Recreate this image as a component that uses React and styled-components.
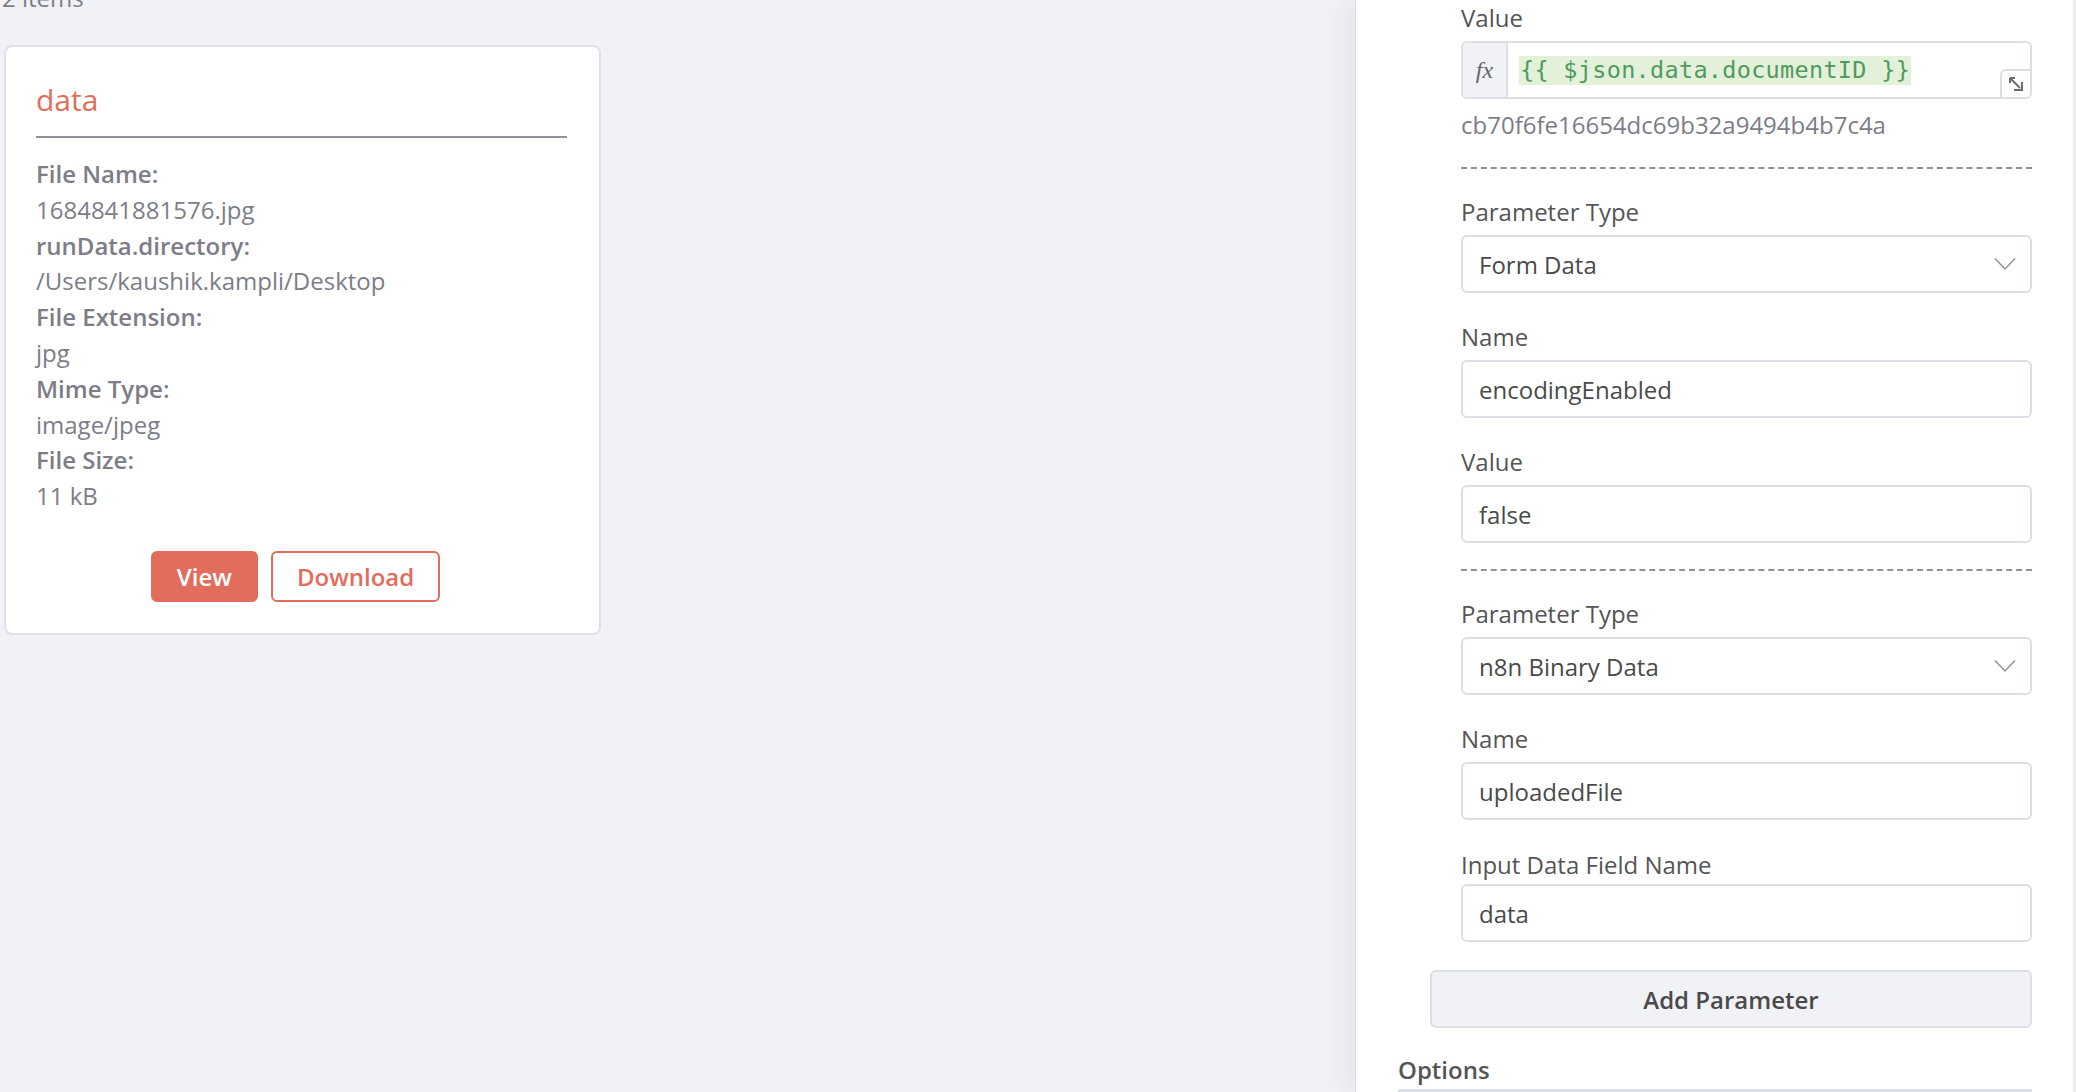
import React from "react";
import styled, { createGlobalStyle } from "styled-components";

const GlobalStyle = createGlobalStyle`
  html, body {
    margin: 0;
    padding: 0;
    width: 2076px;
    height: 1092px;
    overflow: hidden;
    background: #f1f2f6;
    font-family: "Open Sans", "Liberation Sans", sans-serif;
  }
`;

const Page = styled.div`
  display: flex;
  width: 2076px;
  height: 1092px;
  overflow: hidden;
`;

const OutputArea = styled.div`
  flex: 1;
  background: #f1f2f6;
  padding: 0 0 0 4px;
  box-sizing: border-box;
`;

const ItemsCount = styled.div`
  margin-top: -18px;
  height: 24px;
  font-size: 24px;
  line-height: 32px;
  color: #7d7d87;
  margin-left: -2px;
`;

const Card = styled.div`
  margin-top: 39px;
  width: 597px;
  box-sizing: border-box;
  background: #fff;
  border: 2px solid #dfe1e8;
  border-radius: 8px;
  padding: 33px 32px 31px 30px;
`;

const CardTitle = styled.div`
  font-size: 30px;
  line-height: 40px;
  color: #e26d5c;
  padding-bottom: 16px;
  border-bottom: 2px solid #909098;
`;

const MetaList = styled.div`
  margin-top: 18px;
  display: flex;
  flex-direction: column;
`;

const MetaLine = styled.div`
  font-size: 24px;
  line-height: 35.8px;
  color: #7d7d87;
  font-weight: ${(p) => (p.$label ? 600 : 400)};
`;

const ButtonRow = styled.div`
  margin-top: 37px;
  display: flex;
  justify-content: center;
  gap: 13px;
  padding-right: 12px;
`;

const CardButton = styled.button`
  height: 51px;
  padding: 0 24px;
  border-radius: 6px;
  font-family: "Open Sans", "Liberation Sans", sans-serif;
  font-size: 24px;
  font-weight: 600;
  border: 2px solid #e26d5c;
  background: ${(p) => (p.$primary ? "#e26d5c" : "#fff")};
  color: ${(p) => (p.$primary ? "#fff" : "#e26d5c")};
`;

const Panel = styled.div`
  width: 721px;
  height: 1092px;
  flex-shrink: 0;
  background: #fff;
  border-left: 1px solid #dcdfe6;
  border-right: 3px solid #eceef2;
  box-shadow: -10px 0 24px rgba(40, 44, 70, 0.06);
  box-sizing: border-box;
  padding: 2px 41px 0 42px;
  display: flex;
  flex-direction: column;
`;

const Fields = styled.div`
  padding-left: 63px;
  display: flex;
  flex-direction: column;
`;

const Field = styled.div`
  display: flex;
  flex-direction: column;
  margin-bottom: ${(p) => p.$mb ?? 28}px;
`;

const Label = styled.div`
  font-size: 24px;
  line-height: 32px;
  color: #555;
  margin-bottom: ${(p) => p.$mb ?? 7}px;
`;

const InputBox = styled.div`
  position: relative;
  height: 58px;
  box-sizing: border-box;
  border: 2px solid #dcdfe6;
  border-radius: 6px;
  display: flex;
  align-items: center;
  padding-left: 16px;
  font-size: 24px;
  color: #4a4a4a;
`;

const SelectBox = styled(InputBox)`
  justify-content: space-between;
  padding-right: 14px;
`;

const ExprBox = styled.div`
  position: relative;
  height: 58px;
  box-sizing: border-box;
  border: 2px solid #dcdfe6;
  border-radius: 6px;
  display: flex;
  align-items: stretch;
  overflow: hidden;
`;

const FxCell = styled.div`
  width: 43px;
  background: #f1f2f6;
  border-right: 2px solid #dcdfe6;
  display: flex;
  align-items: center;
  justify-content: center;
  font-family: "Liberation Serif", "DejaVu Serif", serif;
  font-style: italic;
  font-size: 24px;
  color: #666;
`;

const ExprText = styled.div`
  display: flex;
  align-items: center;
  padding-left: 11px;
`;

const ExprHighlight = styled.span`
  background: #e3f1da;
  color: #4f9b5d;
  font-family: "DejaVu Sans Mono", "Liberation Mono", monospace;
  font-size: 23.5px;
  line-height: 29px;
  padding: 0 1px;
  letter-spacing: 0.3px;
`;

const ExpandButton = styled.div`
  position: absolute;
  right: -2px;
  bottom: -2px;
  width: 32px;
  height: 30px;
  border: 2px solid #dcdfe6;
  border-radius: 6px 0 6px 0;
  background: #fff;
  display: flex;
  align-items: center;
  justify-content: center;
  box-sizing: border-box;
`;

const Hint = styled.div`
  margin-top: 10px;
  font-size: 24px;
  line-height: 32px;
  color: #7d7d87;
`;

const Dashed = styled.div`
  border-top: 2px dashed #909098;
  margin: ${(p) => p.$mt ?? 26}px 0 27px;
`;

const AddButton = styled.button`
  margin: 0 0 0 32px;
  height: 58px;
  border: 2px solid #dcdfe6;
  border-radius: 6px;
  background: #f1f2f6;
  font-family: "Open Sans", "Liberation Sans", sans-serif;
  font-size: 24px;
  font-weight: 600;
  color: #4a4a4a;
`;

const OptionsTitle = styled.div`
  margin-top: 26px;
  font-size: 24px;
  line-height: 32px;
  font-weight: 600;
  color: #555;
  padding-bottom: 3px;
  border-bottom: 3px solid #dcdfe6;
`;

const Chevron = () => (
  <svg width="22" height="14" viewBox="0 0 22 14" fill="none">
    <path d="M1 1.5 L11 12 L21 1.5" stroke="#909399" strokeWidth="1.5" />
  </svg>
);

const ExpandIcon = () => (
  <svg width="18" height="18" viewBox="0 0 18 18" fill="none" stroke="#6b6b73" strokeWidth="2">
    <path d="M3 3 L13 13" />
    <path d="M3 3 L3 8 M3 3 L8 3" />
    <path d="M7 15 L15 15 L15 7" />
  </svg>
);

const meta = [
  ["File Name:", "1684841881576.jpg"],
  ["runData.directory:", "/Users/kaushik.kampli/Desktop"],
  ["File Extension:", "jpg"],
  ["Mime Type:", "image/jpeg"],
  ["File Size:", "11 kB"],
];

const TextField = ({ label, value, labelMb, mb }) => (
  <Field $mb={mb}>
    <Label $mb={labelMb}>{label}</Label>
    <InputBox>{value}</InputBox>
  </Field>
);

const SelectField = ({ label, value }) => (
  <Field>
    <Label>{label}</Label>
    <SelectBox>
      <span>{value}</span>
      <Chevron />
    </SelectBox>
  </Field>
);

const App = () => {
  return (
    <>
      <GlobalStyle />
      <Page>
        <OutputArea>
          <ItemsCount>2 items</ItemsCount>
          <Card>
            <CardTitle>data</CardTitle>
            <MetaList>
              {meta.map(([k, v]) => (
                <React.Fragment key={k}>
                  <MetaLine $label>{k}</MetaLine>
                  <MetaLine>{v}</MetaLine>
                </React.Fragment>
              ))}
            </MetaList>
            <ButtonRow>
              <CardButton $primary>View</CardButton>
              <CardButton>Download</CardButton>
            </ButtonRow>
          </Card>
        </OutputArea>
        <Panel>
          <Fields>
            <Field $mb={0}>
              <Label>Value</Label>
              <ExprBox>
                <FxCell>fx</FxCell>
                <ExprText>
                  <ExprHighlight>{"{{ $json.data.documentID }}"}</ExprHighlight>
                </ExprText>
                <ExpandButton>
                  <ExpandIcon />
                </ExpandButton>
              </ExprBox>
              <Hint>cb70f6fe16654dc69b32a9494b4b7c4a</Hint>
            </Field>
            <Dashed />
            <SelectField label="Parameter Type" value="Form Data" />
            <TextField label="Name" value="encodingEnabled" />
            <TextField label="Value" value="false" mb={0} />
            <Dashed />
            <SelectField label="Parameter Type" value="n8n Binary Data" />
            <TextField label="Name" value="uploadedFile" mb={29} />
            <TextField label="Input Data Field Name" value="data" labelMb={3} mb={28} />
          </Fields>
          <AddButton>Add Parameter</AddButton>
          <OptionsTitle>Options</OptionsTitle>
        </Panel>
      </Page>
    </>
  );
};

export default App;
